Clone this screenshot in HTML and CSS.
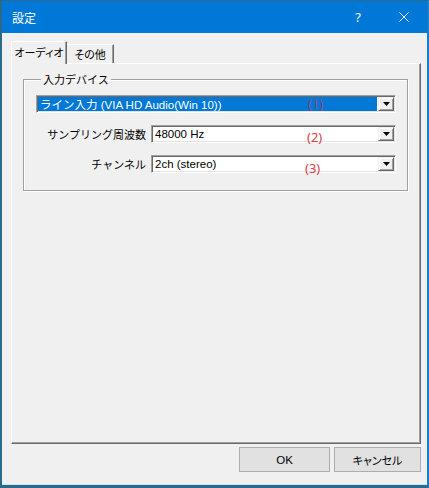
FILE: index.html
```html
<!DOCTYPE html>
<html>
  <head>
    <meta charset="utf-8">
    <title>設定</title>
    <link rel="stylesheet" href="styles.css">
  </head>
  <body>
    <div class="window">
      <header class="titlebar">
        <span class="title">設定</span>
        <span class="caption-btn help">?</span>
        <span class="caption-btn close">
          <svg width="10" height="10" viewBox="0 0 10 10">
            <path d="M0.5 0.5 9.5 9.5M9.5 0.5 0.5 9.5" stroke="#fff" stroke-width="1" fill="none" />
          </svg>
        </span>
      </header>
      <div class="body">
        <nav class="tabs">
          <div class="tab active">オーディオ</div>
          <div class="tab">その他</div>
        </nav>
        <section class="page">
          <fieldset class="group">
            <legend>入力デバイス</legend>
            <div class="rows">
              <div class="combo wide">
                <span class="value selected">ライン入力 (VIA HD Audio(Win 10))</span>
                <span class="drop"><svg width="7" height="4" viewBox="0 0 7 4"><path d="M0 0h7L3.5 4z" fill="#000"/></svg></span>
                <span class="mark mark1">(1)</span>
              </div>
              <label>サンプリング周波数</label>
              <div class="combo">
                <span class="value">48000 Hz</span>
                <span class="drop"><svg width="7" height="4" viewBox="0 0 7 4"><path d="M0 0h7L3.5 4z" fill="#000"/></svg></span>
                <span class="mark mark2">(2)</span>
              </div>
              <label>チャンネル</label>
              <div class="combo">
                <span class="value">2ch (stereo)</span>
                <span class="drop"><svg width="7" height="4" viewBox="0 0 7 4"><path d="M0 0h7L3.5 4z" fill="#000"/></svg></span>
                <span class="mark mark3">(3)</span>
              </div>
            </div>
          </fieldset>
        </section>
        <footer class="buttons">
          <button class="btn ok">OK</button>
          <button class="btn cancel">キャンセル</button>
        </footer>
      </div>
    </div>
  </body>
</html>
```

FILE: styles.css
```css
* { box-sizing: border-box; }
html, body { margin: 0; padding: 0; }
body {
  width: 429px;
  height: 488px;
  font-family: "Liberation Sans", "Noto Sans CJK JP", sans-serif;
  font-size: 11px;
  color: #000;
}
.window {
  width: 429px;
  height: 488px;
  display: flex;
  flex-direction: column;
  border-top: 1px solid #2b6a8a;
  border-left: 2px solid #2b6a8a;
  border-right: 2px solid #1b7ccc;
  border-bottom: 3px solid #2b6a8a;
  background: #f0f0f0;
}

/* title bar */
.titlebar {
  height: 32px;
  flex: none;
  display: flex;
  align-items: center;
  background: #0078d7;
  color: #fff;
}
.title {
  flex: 1;
  padding-left: 10px;
  font-family: "Noto Sans CJK JP", sans-serif;
  font-size: 12px;
}
.caption-btn {
  width: 46px;
  height: 32px;
  display: flex;
  align-items: center;
  justify-content: center;
}
.help {
  font-family: "Noto Sans", sans-serif;
  font-size: 13px;
  padding-bottom: 1px;
}

/* dialog body */
.body {
  flex: 1;
  display: flex;
  flex-direction: column;
  padding: 8px 6px 12px 9px;
  border-bottom: 1px solid #c4e6f5;
}
.tabs {
  height: 22px;
  flex: none;
  display: flex;
  align-items: flex-end;
}
.tab {
  height: 19px;
  display: flex;
  align-items: center;
  justify-content: center;
  white-space: nowrap;
  font-family: "Noto Sans CJK JP", sans-serif;
  font-feature-settings: "palt";
  font-size: 11px;
  background: #f0f0f0;
  border-top: 1px solid #fff;
  border-right: 1px solid #696969;
  box-shadow: inset -1px 0 0 #a0a0a0;
}
.tab.active {
  position: relative;
  z-index: 1;
  height: 23px;
  margin-bottom: -1px;
  width: 56px;
  padding-bottom: 2px;
  border-left: 1px solid #fff;
}
.tab:not(.active) { width: 47px; }

.page {
  flex: 1;
  border: 1px solid;
  border-color: #fff #696969 #696969 #fff;
  box-shadow: inset -1px -1px 0 #a0a0a0;
  padding: 7px 12px 0 11px;
}

/* group box */
.group {
  margin: 0;
  padding: 8px 11px 17px 12px;
  border: 1px solid #a0a0a0;
  box-shadow: 1px 1px 0 #fff, inset 1px 1px 0 #fff;
}
.group legend {
  margin-left: 5px;
  padding: 0 2px;
  font-family: "Noto Sans CJK JP", sans-serif;
  font-size: 11px;
  line-height: 16px;
}
.rows {
  display: grid;
  grid-template-columns: 110px 1fr;
  column-gap: 5px;
  row-gap: 12px;
}
.rows label {
  display: flex;
  align-items: center;
  justify-content: flex-end;
  font-family: "Noto Sans CJK JP", sans-serif;
  font-size: 11px;
}
.combo {
  position: relative;
  height: 18px;
  display: flex;
  padding: 1px;
  background: #fff;
  border: 1px solid;
  border-color: #a0a0a0 #fff #fff #a0a0a0;
  box-shadow: inset 1px 1px 0 #696969, inset -1px -1px 0 #e3e3e3;
}
.combo.wide { grid-column: 1 / 3; }
.value {
  flex: 1;
  display: flex;
  align-items: center;
  padding-left: 2px;
  margin-right: 1px;
  font-size: 11.5px;
  white-space: nowrap;
}
.value.selected {
  background: #0078d7;
  color: #fff;
}
.drop {
  width: 16px;
  display: flex;
  align-items: center;
  justify-content: center;
  background: #f0f0f0;
  border: 1px solid;
  border-color: #f0f0f0 #696969 #696969 #f0f0f0;
  box-shadow: inset 1px 1px 0 #fff, inset -1px -1px 0 #a0a0a0;
}
.drop svg { display: block; }

/* red annotations over the combos */
.mark {
  position: absolute;
  font-family: "Noto Sans", sans-serif;
  font-size: 13px;
  line-height: 16px;
  color: #e23b3f;
}
.mark1 { left: 271px; top: 0; color: #a6406c; }
.mark2 { left: 155px; top: 3px; }
.mark3 { left: 153px; top: 4px; }

/* buttons */
.buttons {
  flex: none;
  display: flex;
  justify-content: flex-end;
  gap: 4px;
  margin-top: 3px;
}
.btn {
  height: 25px;
  margin: 0;
  padding: 0;
  background: #e1e1e1;
  border: 1px solid #adadad;
  color: #000;
  font-family: "Liberation Sans", "Noto Sans CJK JP", sans-serif;
  font-size: 11.5px;
}
.ok { width: 91px; }
.cancel {
  width: 87px;
  font-family: "Noto Sans CJK JP", sans-serif;
  font-feature-settings: "palt";
  font-size: 11px;
}
```
